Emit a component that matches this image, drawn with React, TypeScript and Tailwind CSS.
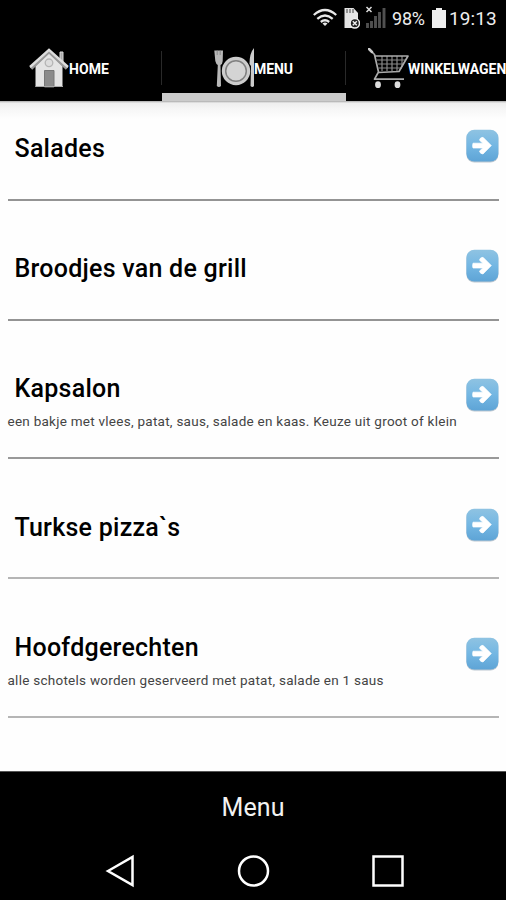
import React from "react";

function ArrowButton({ id }: { id: string }) {
  return (
    <svg width="34" height="34" viewBox="0 0 34 34" className="block">
      <defs>
        <linearGradient id={id} x1="0" y1="0" x2="0" y2="1">
          <stop offset="0" stopColor="#8fc3e2" />
          <stop offset="0.5" stopColor="#74b7e3" />
          <stop offset="1" stopColor="#5ea4d6" />
        </linearGradient>
      </defs>
      <rect x="1.400" y="1.700" width="32" height="31.800" rx="8" fill="#9aabb8" opacity="0.65" />
      <rect x="1.400" y="0.700" width="32" height="31.800" rx="8" fill={`url(#${id})`} />
      <path d="M8 14.200H17.800L14.500 11.200Q15 8.300 18 8.300L26.300 16.600L18 25Q15 24.800 14.500 22L17.800 19H8Q7.200 16.500 8 14.200z" fill="#fff" stroke="#fff" strokeWidth="0.700" strokeLinejoin="round" />
    </svg>
  );
}

function HomeIcon() {
  return (
    <svg width="40" height="40" viewBox="0 0 40 40" className="block shrink-0">
      <path d="M31 4h3v11l-3-3z" fill="#aaa" stroke="#ddd" strokeWidth="1" />
      <path d="M6.500 18L20 4.500L33.500 18V39H6.500z" fill="#e4e4e4" />
      <path d="M2 20.500L20 3.500L38 20.500" fill="none" stroke="#999" strokeWidth="3.500" />
      <path d="M1 19L20 1.800L39 19" fill="none" stroke="#ddd" strokeWidth="2.400" />
      <circle cx="20" cy="14.800" r="3.800" fill="#ddd" stroke="#b5b5b5" strokeWidth="1.300" />
      <path d="M15.500 22.500H25V39H15.500z" fill="#8b8b8b" stroke="#777" strokeWidth="1" />
      <path d="M6.500 38.500H34" stroke="#aaa" strokeWidth="1" />
    </svg>
  );
}

function PlateIcon() {
  return (
    <svg width="40" height="40" viewBox="0 0 40 40" className="block shrink-0">
      <path d="M.300 2.500L1.300 13Q2 16 3.800 17L2.800 38Q5 40 7 38L6.500 17Q8.500 16 8.700 13L9 2.500z" fill="#b9b9b9" />
      <path d="M3.200 2V7M6.200 2V7" stroke="#777" strokeWidth="0.700" />
      <circle cx="22" cy="23" r="14.200" fill="#ccc" />
      <circle cx="22" cy="23" r="10.300" fill="#d4d4d4" stroke="#808080" strokeWidth="1.500" />
      <path d="M40 0Q35.500 5 35.500 16L37 18L36.500 38Q38.500 40 40 38z" fill="#ccc" />
    </svg>
  );
}

function CartIcon() {
  return (
    <svg width="42" height="42" viewBox="0 0 42 42" className="block shrink-0">
      <g fill="none" stroke="#888" strokeWidth="1.200">
        <path d="M9 12H37M10 16H36M10.500 20H34M14 8V23M19 8V23M24 8V23M29 8V23M34 8V19" />
      </g>
      <path d="M1 1L6.500 6.500L10.500 24L6.500 31.200H36M7.500 8H40L31 23.500L10.500 24.500" fill="none" stroke="#aaa" strokeWidth="1.700" strokeLinejoin="round" />
      <path d="M1 1L4 4" stroke="#ccc" strokeWidth="2.500" strokeLinecap="round" />
      <ellipse cx="10" cy="36.700" rx="2.900" ry="3.400" fill="#ddd" />
      <ellipse cx="29.500" cy="36.700" rx="2.900" ry="3.400" fill="#ddd" />
    </svg>
  );
}

function StatusBar() {
  return (
    <div className="flex h-[37px] items-center justify-end pr-[9px] text-[#eee]">
      <svg width="24" height="19" viewBox="0 0 24 19" className="mr-[6px] -mt-[3px]">
        <g fill="none" stroke="#e8e8e8" strokeWidth="2.300">
          <path d="M.800 7Q12 -3 23.200 7M4.300 10.800Q12 4.200 19.700 10.800M7.800 14Q12 10.500 16.200 14" />
        </g>
        <path d="M9.500 15.500Q12 13.500 14.500 15.500L12 18z" fill="#e8e8e8" />
      </svg>
      <svg width="17" height="21" viewBox="0 0 17 21" className="mr-[5px] -mt-px">
        <path d="M1.500 0H10.500L15 5V20H1.500z" fill="#e4e4e4" />
        <path d="M4 1V5M7 1V5M10 1V5" stroke="#777" strokeWidth="1.500" />
        <circle cx="11.800" cy="15.300" r="4.700" fill="#222" stroke="#eee" strokeWidth="1.500" />
        <path d="M9.800 13.300L13.800 17.300M13.800 13.300L9.800 17.300" stroke="#eee" strokeWidth="1.400" />
      </svg>
      <svg width="22" height="22" viewBox="0 0 22 22" className="mr-[5px] -mt-[4px]">
        <path d="M1.500 1L6.500 6M6.500 1L1.500 6" stroke="#ddd" strokeWidth="1.500" />
        <path d="M2.500 17V22M6.500 15V22M10.500 10V22M14.500 6V22M19 2V22" stroke="#505050" strokeWidth="2.900" />
      </svg>
      <span className="w-[34px] text-[18px] leading-none tracking-[-0.2px] whitespace-nowrap">98%</span>
      <svg width="14" height="20" viewBox="0 0 14 20" className="ml-[6px] mr-[3px] -mt-[2px]">
        <path d="M0 2H4V0H10V2H14V20H0z" fill="#eee" />
      </svg>
      <span className="w-[48px] text-[19px] leading-none tracking-[0.1px] whitespace-nowrap">19:13</span>
    </div>
  );
}

function Tabs() {
  const label = "text-[14px] font-bold leading-none whitespace-nowrap";
  return (
    <div className="flex h-[64px] overflow-hidden text-white">
      <div className="flex w-[161px] shrink-0 items-start pt-[11px] pl-[29px]">
        <HomeIcon />
        <span className={`${label} mt-[14px] tracking-[0.1px]`}>HOME</span>
      </div>
      <div className="flex w-[185px] shrink-0 flex-col">
        <div className="flex h-[56px] items-start">
          <div className="mt-[14px] h-[34px] w-px bg-[#292929]" />
          <div className="flex flex-1 pt-[11px] pl-[52px]">
            <PlateIcon />
            <span className={`${label} mt-[14px] tracking-[-0.1px]`}>MENU</span>
          </div>
          <div className="mt-[14px] h-[34px] w-px bg-[#292929]" />
        </div>
        <div className="ml-px h-[8px] bg-[#cbcbcb]" />
      </div>
      <div className="flex shrink-0 items-start pt-[11px] pl-[22px]">
        <CartIcon />
        <span className={`${label} mt-[14px] -ml-[2px] tracking-[0px]`}>WINKELWAGEN</span>
      </div>
    </div>
  );
}

interface Item {
  title: string;
  note?: string;
  row: string;
  arrow: string;
  line: string;
}

const items: Item[] = [
  { title: "Salades", row: "h-[100px] pt-[33px]", arrow: "-mt-[5px]", line: "bg-[#949494]" },
  { title: "Broodjes van de grill", row: "h-[120px] pt-[53px]", arrow: "-mt-[5px]", line: "bg-[#949494]" },
  { title: "Kapsalon", note: "een bakje met vlees, patat, saus, salade en kaas. Keuze uit groot of klein", row: "h-[138px] pt-[53px]", arrow: "mt-[4px]", line: "bg-[#999]" },
  { title: "Turkse pizza`s", row: "h-[120px] pt-[54px]", arrow: "-mt-[5px]", line: "bg-[#b5b5b5]" },
  { title: "Hoofdgerechten", note: "alle schotels worden geserveerd met patat, salade en 1 saus", row: "h-[139px] pt-[54px]", arrow: "mt-[4px]", line: "bg-[#b5b5b5]" },
];

export default function App() {
  return (
    <div className="flex h-[900px] w-[506px] flex-col overflow-hidden bg-black font-['Roboto','Noto_Sans',sans-serif]">
      <StatusBar />
      <Tabs />
      <main className="h-[670px] bg-white bg-[linear-gradient(#a9a9a9_0px,#eeeeee_2px,#f6f6f6_8px,#fefefe_18px)]">
        {items.map((item, i) => (
          <div key={item.title} className={`flex flex-col px-[7.500px] ${item.row}`}>
            <div className="flex flex-1 items-start justify-between">
              <div>
                <h2 className="pl-[7px] text-[25px] font-medium leading-[30px] tracking-[0.25px] text-black whitespace-nowrap">{item.title}</h2>
                {item.note && <p className="mt-[9px] text-[13.500px] leading-[16px] tracking-[0.260px] text-[#444] whitespace-nowrap">{item.note}</p>}
              </div>
              <div className={`-mr-[0.500px] ${item.arrow}`}>
                <ArrowButton id={`arrow-${i}`} />
              </div>
            </div>
            <div className={`h-[2px] shrink-0 ${item.line}`} />
          </div>
        ))}
      </main>
      <div className="flex h-[71px] items-center justify-center border-t border-[#555] pt-[2px] text-[25px] tracking-[0.1px] text-[#f2f2f2]">Menu</div>
      <nav className="flex justify-between pt-[12px] pr-[101px] pl-[105px]">
        <svg width="30" height="34" viewBox="0 0 30 34"><path d="M3 17L27.500 3V31z" fill="none" stroke="#fff" strokeWidth="2.500" /></svg>
        <svg width="34" height="34" viewBox="0 0 34 34"><circle cx="17.500" cy="17" r="14.500" fill="none" stroke="#fff" strokeWidth="2.500" /></svg>
        <svg width="34" height="34" viewBox="0 0 34 34"><rect x="2.500" y="2.500" width="29" height="29" fill="none" stroke="#fff" strokeWidth="2.500" /></svg>
      </nav>
    </div>
  );
}
